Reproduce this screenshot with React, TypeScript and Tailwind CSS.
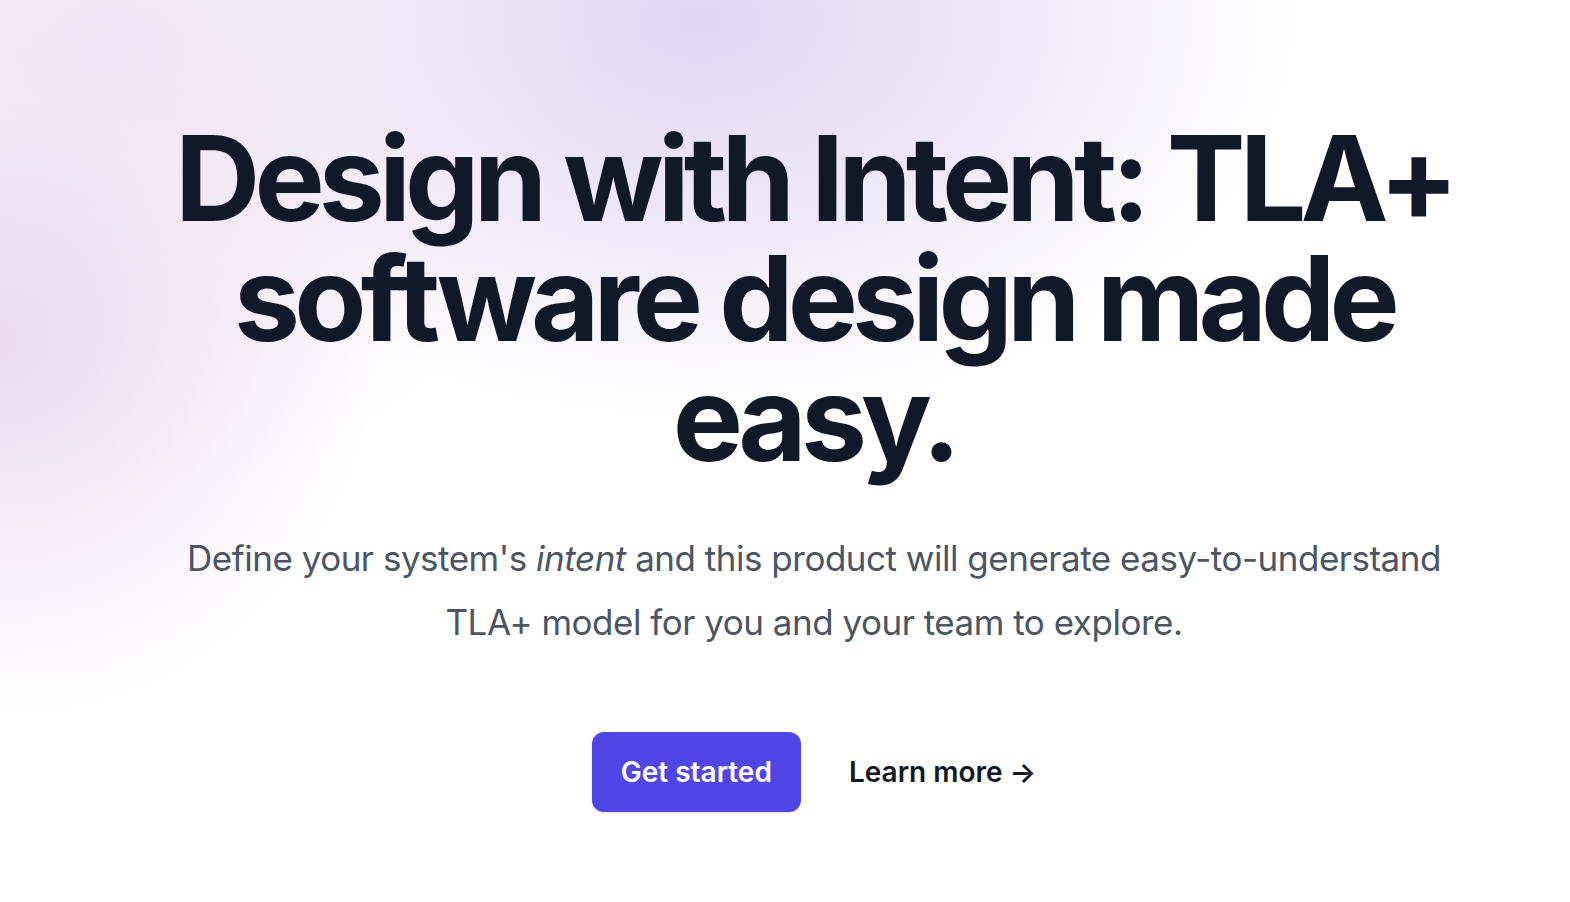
import React from "react";

export default function App() {
  return (
    <div className="relative isolate min-h-[902px] w-full overflow-hidden bg-white" style={{ fontFamily: "Inter, 'Noto Sans', sans-serif" }}>
      <div aria-hidden="true" className="pointer-events-none absolute inset-0 -z-10">
        <div className="absolute left-[100px] top-[-380px] h-[800px] w-[1200px] rounded-full bg-[radial-gradient(closest-side,rgba(221,212,244,0.95),rgba(228,220,246,0.6)_55%,rgba(255,255,255,0))]" />
        <div className="absolute left-[-400px] top-[-400px] h-[900px] w-[1000px] rounded-full bg-[radial-gradient(closest-side,rgba(236,226,245,0.9),rgba(240,232,247,0.5)_60%,rgba(255,255,255,0))]" />
        <div className="absolute left-[-380px] top-[-40px] h-[760px] w-[760px] rounded-full bg-[radial-gradient(closest-side,rgba(234,216,241,0.95),rgba(240,228,245,0.55)_60%,rgba(255,255,255,0))]" />
      </div>
      <div className="flex w-full justify-center pl-[58px]">
        <div className="flex w-[1300px] flex-col items-center pt-[118px] text-center">
          <h1 className="text-[118px] font-bold leading-[120px] tracking-[-0.05em] text-[#111827]">
            Design with Intent: TLA+ software design made easy.
          </h1>
          <p className="mt-[48px] text-[35px] leading-[64px] tracking-[-0.014em] text-[#4b5563]">
            Define your system's <em>intent</em> and this product will generate easy-to-understand TLA+ model for you and your team to explore.
          </p>
          <div className="mt-[78px] flex items-center justify-center gap-x-[48px]">
            <a href="#" className="rounded-[12px] bg-[#4f46e5] px-[29px] py-[20px] text-[28px] font-semibold leading-[40px] text-white shadow-sm">
              Get started
            </a>
            <a href="#" className="text-[28px] font-semibold leading-[40px] text-[#111827]">
              Learn more <span aria-hidden="true">→</span>
            </a>
          </div>
        </div>
      </div>
    </div>
  );
}
